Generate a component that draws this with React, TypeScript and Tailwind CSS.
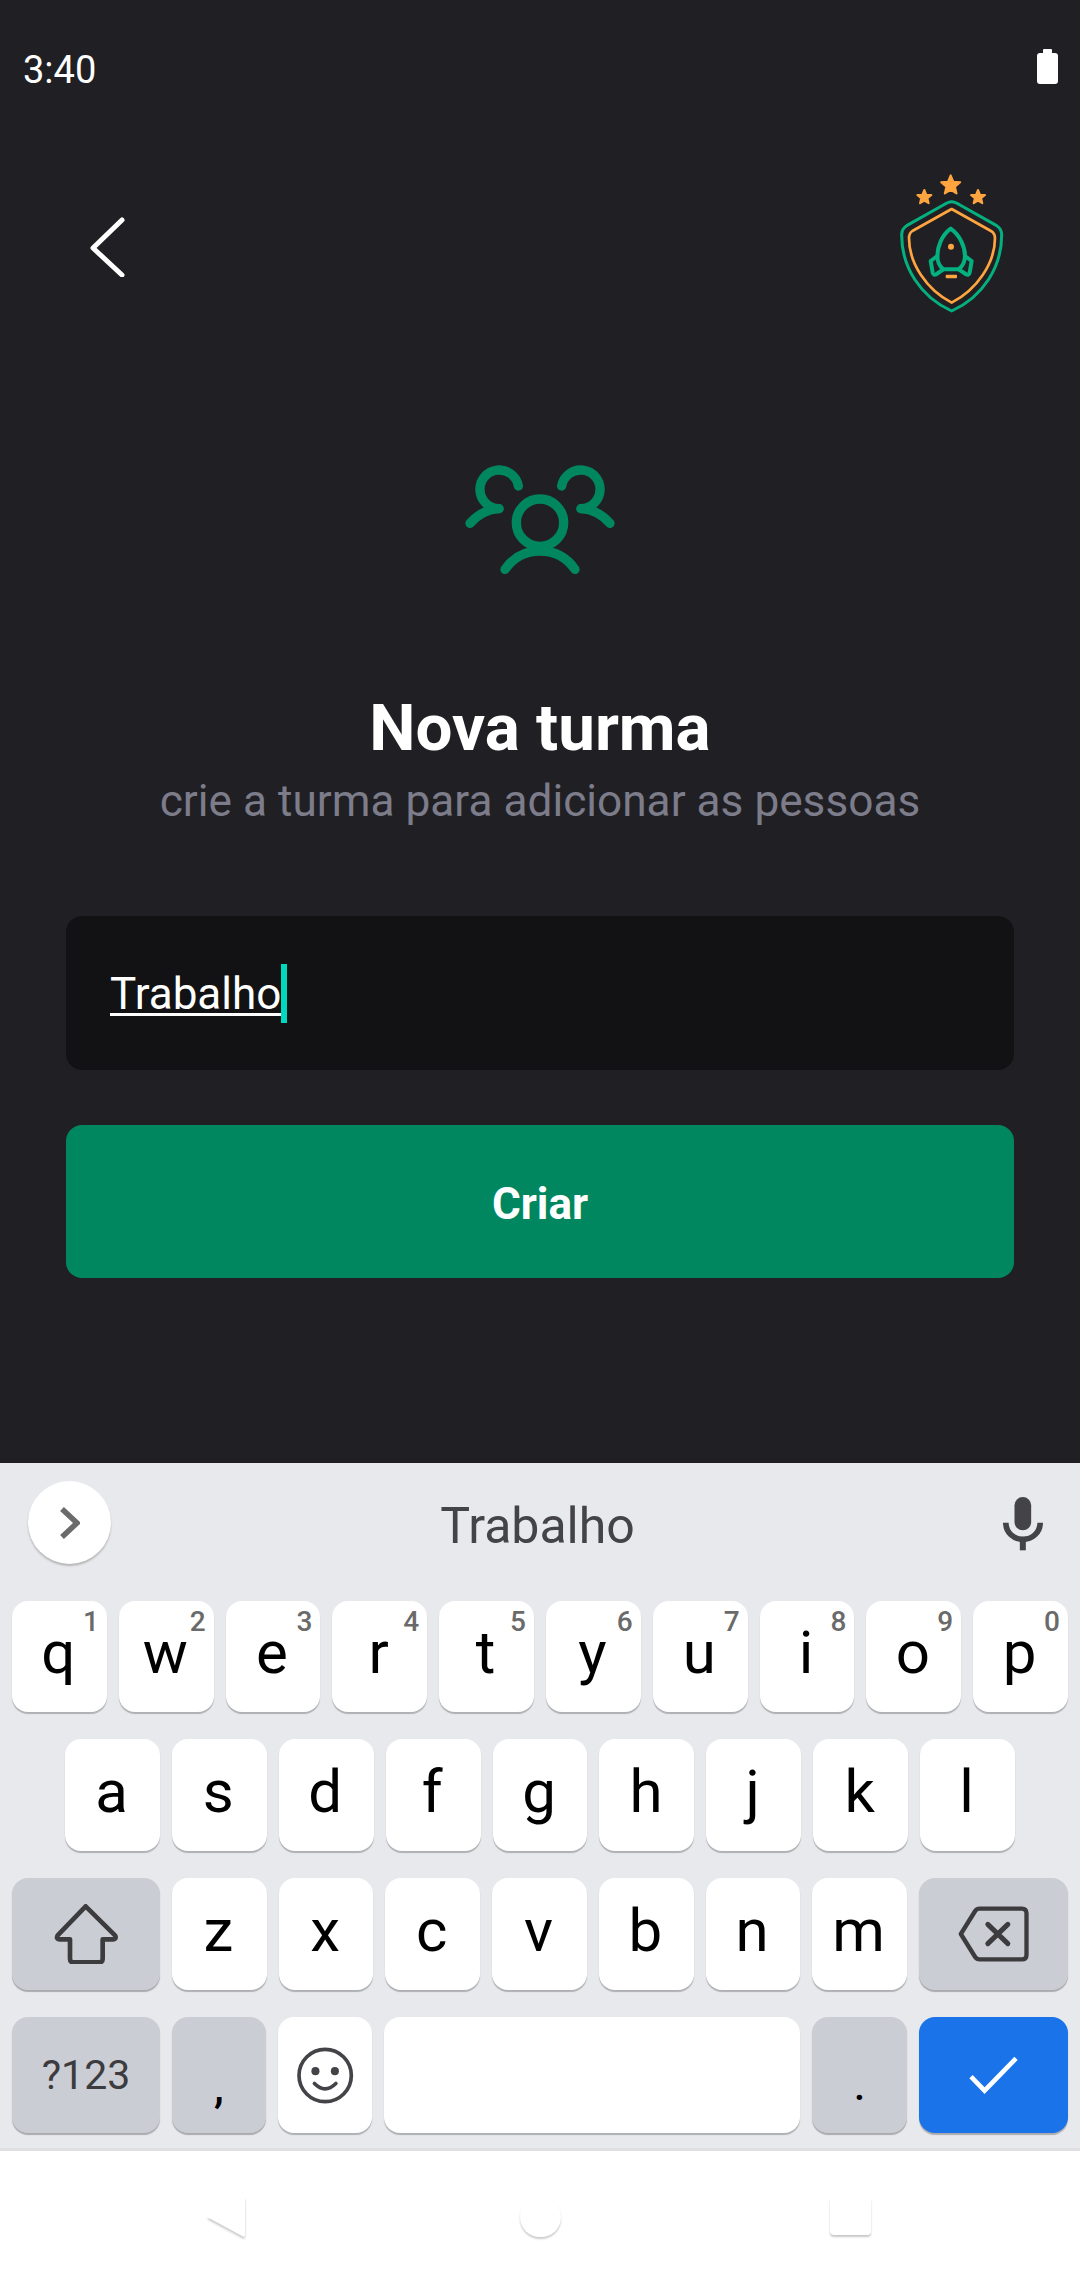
const ROBOTO = "font-['Roboto',sans-serif]";

const TOP_ROW = [
  ["q", "1"],
  ["w", "2"],
  ["e", "3"],
  ["r", "4"],
  ["t", "5"],
  ["y", "6"],
  ["u", "7"],
  ["i", "8"],
  ["o", "9"],
  ["p", "0"],
];
const MIDDLE_ROW = ["a", "s", "d", "f", "g", "h", "j", "k", "l"];
const BOTTOM_ROW = ["z", "x", "c", "v", "b", "n", "m"];

const starPoints = (cx: number, cy: number, r: number) =>
  Array.from({ length: 10 })
    .map((_, i) => {
      const radius = i % 2 === 0 ? r : r * 0.45;
      const angle = -Math.PI / 2 + (i * Math.PI) / 5;
      return `${cx + radius * Math.cos(angle)},${cy + radius * Math.sin(angle)}`;
    })
    .join(" ");

const Logo = () => (
  <svg width="160" height="180" viewBox="0 0 480 540" fill="none" strokeLinejoin="round" strokeLinecap="round">
    {/* Stars */}
    <g fill="#ffa53f" stroke="#ffa53f" strokeWidth="6">
      <polygon points={starPoints(272, 106, 30)} />
      <polygon points={starPoints(193, 142, 22)} />
      <polygon points={starPoints(354, 142, 22)} />
    </g>
    {/* Shield */}
    <path
      d="M275 155Q285 155 300 165L410 227Q425 236 425 255C425 350 370 440 275 483C180 440 125 350 125 255Q125 236 140 227L250 165Q265 155 275 155Z"
      stroke="#04b07f"
      strokeWidth="9"
    />
    <path
      d="M275 177L393 243Q405 250 405 264C405 340 350 420 275 458C200 420 147 340 147 264Q147 250 157 243Z"
      stroke="#ffa53f"
      strokeWidth="8"
    />
    {/* Rocket */}
    <g stroke="#04b07f" strokeWidth="12">
      <path d="M272 236C245 256 232 290 232 318C232 335 240 350 250 358H296C306 350 315 335 315 318C315 290 300 256 272 236Z" />
      <path d="M232 318L212 333L218 368Q220 378 230 372L250 358" />
      <path d="M315 318L335 333L329 368Q327 378 317 372L296 358" />
    </g>
    <circle cx="273" cy="290" r="9" fill="#ffa53f" />
    <rect x="257" y="374" width="34" height="11" rx="3" fill="#ffa53f" />
  </svg>
);

const GroupIcon = () => (
  <svg width="200" height="150" viewBox="0 0 600 450" fill="none" stroke="#00875f" strokeWidth="28" strokeLinecap="round">
    <circle cx="300" cy="248" r="71" />
    <path d="M195 388C225 345 265 333 300 333C335 333 375 345 405 388" />
    <path d="M235 138A58 58 0 1 0 177 206" />
    <path d="M90 250C115 222 140 208 177 206" />
    <path d="M365 138A58 58 0 1 1 423 206" />
    <path d="M510 250C485 222 460 208 423 206" />
  </svg>
);

const Key = ({ label, hint }: { label: string; hint?: string }) => (
  <div className="relative flex h-full flex-1 items-center justify-center rounded-[16px] bg-white pb-[7px] pr-[2px] text-[60px] leading-none text-black shadow-[0_2px_1px_#aeb0b4]">
    {label}
    {hint && (
      <span className="absolute right-[8px] top-[7px] text-[28px] font-medium leading-none text-[#6a6a6a]">{hint}</span>
    )}
  </div>
);

export default function App() {
  return (
    <div className={`flex h-[2280px] w-[1080px] flex-col overflow-hidden bg-[#202024] ${ROBOTO}`}>
      {/* Status bar */}
      <div className="flex h-[150px] shrink-0 items-start justify-between pl-[23px] pr-[22px] pt-[48px] text-white">
        <span className="text-[38px] leading-[45px]">3:40</span>
        <div className="mt-[1px] flex flex-col items-center">
          <div className="h-[4px] w-[9px] rounded-t-[1px] bg-white" />
          <div className="h-[31px] w-[21px] rounded-[3px] bg-white" />
        </div>
      </div>

      {/* Header */}
      <div className="flex h-[180px] shrink-0 items-start justify-between pl-[90px] pr-[60px]">
        <svg className="mt-[67px]" width="36" height="60" viewBox="0 0 36 60" fill="none" stroke="#fff" strokeWidth="5" strokeLinecap="round" strokeLinejoin="round">
          <path d="M32 3L3 31L32 58" />
        </svg>
        <Logo />
      </div>

      {/* Form */}
      <div className="flex flex-1 flex-col items-center px-[66px]">
        <div className="mt-[110px]">
          <GroupIcon />
        </div>
        <h1 className="mt-[98px] text-[65.5px] font-bold leading-[80px] text-white">Nova turma</h1>
        <p className="mt-[8px] text-[44.2px] leading-[50px] text-[#7c7c8a]">crie a turma para adicionar as pessoas</p>
        <div className="mt-[90px] flex h-[154px] w-full items-center rounded-[16px] bg-[#121214] pl-[44px]">
          <span className="pt-[2px] text-[44px] leading-[60px] text-white underline decoration-[3px] underline-offset-[4px]">Trabalho</span>
          <span className="h-[59px] w-[6px] bg-[#00d9bd]" />
        </div>
        <div className="mt-[55px] flex h-[153px] w-full items-center justify-center rounded-[16px] bg-[#00875f] pt-[4px] text-[44px] font-bold text-white">
          Criar
        </div>
      </div>

      {/* Keyboard */}
      <div className="flex h-[688px] shrink-0 flex-col border-b-[3px] border-[#dfdfe1] bg-[#e8e9ed] text-[#000]">
        <div className="flex h-[138px] shrink-0 items-start justify-between pl-[28px] pr-[36px] pt-[18px]">
          <div className="flex h-[83px] w-[83px] items-center justify-center rounded-full bg-white shadow-[0_2px_2px_#b5b5b5]">
            <svg width="20" height="32" viewBox="0 0 20 32" fill="none" stroke="#6b6b6b" strokeWidth="5.5">
              <path d="M2 2L17 16L2 30" />
            </svg>
          </div>
          <span className="mr-[38px] mt-[16px] text-[50px] leading-[58px] text-[#444448]">Trabalho</span>
          <svg className="mt-[15px]" width="42" height="55" viewBox="370 105 125 165">
            <rect x="407" y="108" width="50" height="100" rx="25" fill="#444448" />
            <path d="M381 185C381 215 405 235 432 235C460 235 484 215 484 185" fill="none" stroke="#444448" strokeWidth="17" />
            <rect x="423" y="232" width="18" height="36" fill="#444448" />
          </svg>
        </div>

        <div className="flex h-[111px] shrink-0 gap-[12px] px-[12px]">
          {TOP_ROW.map(([label, hint]) => (
            <Key key={label} label={label} hint={hint} />
          ))}
        </div>

        <div className="mt-[27px] flex h-[112px] shrink-0 gap-[12px] px-[65px]">
          {MIDDLE_ROW.map((label) => (
            <Key key={label} label={label} />
          ))}
        </div>

        <div className="mt-[27px] flex h-[112px] shrink-0 gap-[12px] px-[12px]">
          <div className="flex w-[148px] shrink-0 items-center justify-center rounded-[16px] bg-[#cbcdd4] shadow-[0_2px_1px_#a9abaf]">
            <svg width="64" height="60" viewBox="160 128 192 180" fill="none" stroke="#3c3c3f" strokeWidth="14" strokeLinejoin="round">
              <path d="M255 135L171 222Q165 233 177 234H208V293Q208 303 218 303H296Q306 303 306 293V234H337Q349 233 343 222Z" />
            </svg>
          </div>
          {BOTTOM_ROW.map((label) => (
            <Key key={label} label={label} />
          ))}
          <div className="flex w-[149px] shrink-0 items-center justify-center rounded-[16px] bg-[#cbcdd4] shadow-[0_2px_1px_#a9abaf]">
            <svg width="73" height="58" viewBox="530 142 218 174" fill="none" stroke="#3c3c3f" strokeWidth="13" strokeLinejoin="round" strokeLinecap="round">
              <path d="M597 153H724Q738 153 738 167V291Q738 305 724 305H597Q589 305 584 298L541 229L584 160Q589 153 597 153Z" />
              <path d="M622 200L682 258M682 200L622 258" strokeWidth="15" />
            </svg>
          </div>
        </div>

        <div className="mt-[27px] flex h-[116px] shrink-0 gap-[12px] px-[12px]">
          <div className="flex w-[148px] shrink-0 items-center justify-center rounded-[16px] bg-[#cbcdd4] pt-[2px] text-[41px] text-[#3c3c3f] shadow-[0_2px_1px_#a9abaf]">
            ?123
          </div>
          <div className="flex w-[94px] shrink-0 items-end justify-center rounded-[16px] bg-[#cbcdd4] pb-[26px] text-[44px] font-medium leading-[40px] shadow-[0_2px_1px_#a9abaf]">
            ,
          </div>
          <div className="flex w-[94px] shrink-0 items-center justify-center rounded-[16px] bg-white shadow-[0_2px_1px_#aeb0b4]">
            <svg width="57" height="57" viewBox="890 555 170 170" fill="none" stroke="#444448" strokeWidth="11">
              <circle cx="974" cy="640" r="78" />
              <circle cx="945" cy="627" r="12" fill="#444448" stroke="none" />
              <circle cx="1003" cy="627" r="12" fill="#444448" stroke="none" />
              <path d="M942 664Q973 696 1006 664" strokeLinecap="round" />
            </svg>
          </div>
          <div className="flex-1 rounded-[16px] bg-white shadow-[0_2px_1px_#aeb0b4]" />
          <div className="flex w-[95px] shrink-0 items-end justify-center rounded-[16px] bg-[#cbcdd4] pb-[26px] text-[40px] font-medium leading-[40px] shadow-[0_2px_1px_#a9abaf]">
            .
          </div>
          <div className="flex w-[149px] shrink-0 items-center justify-center rounded-[16px] bg-[#1a73e8] shadow-[0_2px_1px_#a9abaf]">
            <svg width="53" height="40" viewBox="560 585 160 120" fill="none" stroke="#fff" strokeWidth="14">
              <path d="M572 650L613 692L708 595" />
            </svg>
          </div>
        </div>
      </div>

      {/* Navigation bar */}
      <div className="flex h-[129px] shrink-0 items-start bg-white pt-[46px]">
        <svg className="ml-[207px] drop-shadow-[0_2px_1px_rgba(0,0,0,0.22)]" width="38" height="40" viewBox="0 0 38 40">
          <path d="M0 20L38 0V38Q38 41 35 39Z" fill="#fff" />
        </svg>
        <div className="ml-[275px] h-[40px] w-[41px] rounded-full bg-white shadow-[0_2px_2px_rgba(0,0,0,0.2)]" />
        <div className="ml-[269px] h-[38px] w-[41px] rounded-[4px] bg-white shadow-[0_2px_2px_rgba(0,0,0,0.22)]" />
      </div>
    </div>
  );
}
